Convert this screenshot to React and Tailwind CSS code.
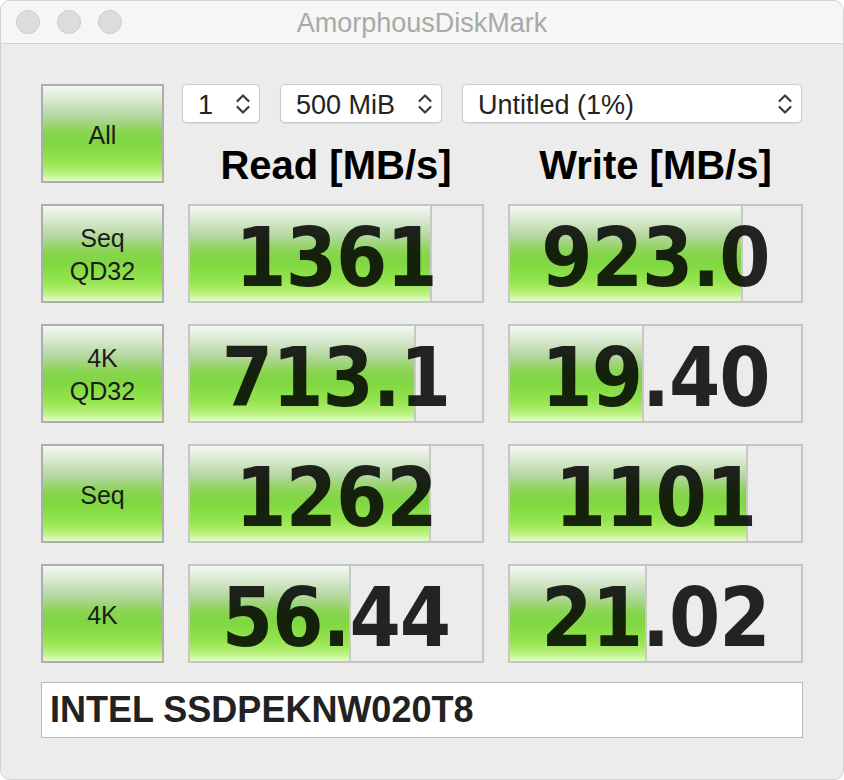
import React from "react";

// shared green "glossy" fill used by buttons and bars
const GREEN =
  "bg-[linear-gradient(to_bottom,#f4f7f2_0%,#d6e7cd_16%,#aed596_34%,#8cd556_47%,#7fd642_58%,#92e44b_78%,#b2ef72_90%,#e4fbc8_100%)]";

const results = [
  { label: ["Seq", "QD32"], read: "1361", readW: 242, write: "923.0", writeW: 233 },
  { label: ["4K", "QD32"], read: "713.1", readW: 226, write: "19.40", writeW: 134 },
  { label: ["Seq"], read: "1262", readW: 241, write: "1101", writeW: 238 },
  { label: ["4K"], read: "56.44", readW: 161, write: "21.02", writeW: 137 },
];

const Chevrons = () => (
  <svg width="16" height="26" viewBox="0 0 16 26" fill="none" stroke="#3a3a3a" strokeWidth="2.2" strokeLinecap="round" strokeLinejoin="round">
    <path d="M2.5 10 L8 4.5 L13.5 10" />
    <path d="M2.5 16 L8 21.5 L13.5 16" />
  </svg>
);

const Select = ({ value, width }) => (
  <div
    className="flex h-[39px] items-center justify-between rounded-[5px] border border-[#c9c9c9] bg-white pl-[15px] pr-[8px] text-[27px] text-[#232323] shadow-[0_1px_1px_rgba(0,0,0,0.08)]"
    style={{ width }}
  >
    <span className="pt-[3px] leading-none">{value}</span>
    <Chevrons />
  </div>
);

const TestButton = ({ lines }) => (
  <button
    className={`flex h-[99px] w-[123px] flex-col items-center justify-center border-2 border-[#adadad] pt-[3px] ${GREEN} text-[25px] leading-[33px] text-[#1c1c1c]`}
  >
    {lines.map((l) => (
      <span key={l}>{l}</span>
    ))}
  </button>
);

const ResultBar = ({ value, fill }) => (
  <div className="relative h-[99px] border-2 border-[#c5c5c5] bg-[#ececec]">
    <div className={`h-full border-r-2 border-[#c8c8c8] ${GREEN}`} style={{ width: fill }} />
    <div className="absolute inset-0 flex items-center justify-center pt-[8px]">
      <span className="font-['DejaVu_Sans',sans-serif] text-[82px] font-bold leading-[95px] font-stretch-condensed tracking-[-1px] text-black/85">
        {value}
      </span>
    </div>
  </div>
);

export default function App() {
  return (
    <div className="h-[780px] w-[844px] bg-white font-['Liberation_Sans',Arial,sans-serif]">
      <div className="flex h-full flex-col overflow-hidden rounded-[10px] border border-[#d2d2d2] bg-[#ececec]">
        {/* title bar */}
        <div className="relative flex h-[43px] shrink-0 items-center justify-center border-b border-[#d1d1d1] bg-[#f6f6f6]">
          <div className="absolute left-[15px] top-[9px] flex gap-[17px]">
            <span className="h-[24px] w-[24px] rounded-full border border-[#cbcbcb] bg-[#dcdcdc]" />
            <span className="h-[24px] w-[24px] rounded-full border border-[#cbcbcb] bg-[#dcdcdc]" />
            <span className="h-[24px] w-[24px] rounded-full border border-[#cbcbcb] bg-[#dcdcdc]" />
          </div>
          <span className="pt-[2px] text-[27px] text-[#a9a9a9]">AmorphousDiskMark</span>
        </div>

        <div className="px-[40px] pt-[40px]">
          <div className="grid grid-cols-[123px_296px_295px] gap-x-[24px] gap-y-[21px]">
            <TestButton lines={["All"]} />
            <div className="col-span-2 flex flex-col">
              <div className="-ml-[6px] flex gap-[20px]">
                <Select value="1" width={78} />
                <Select value="500 MiB" width={162} />
                <Select value="Untitled (1%)" width={340} />
              </div>
              <div className="mt-[24px] grid grid-cols-[296px_295px] gap-x-[24px] text-[40px] font-bold leading-[36px] text-black">
                <div className="text-center">Read [MB/s]</div>
                <div className="text-center">Write [MB/s]</div>
              </div>
            </div>

            {results.map((r) => (
              <React.Fragment key={r.label.join(" ")}>
                <TestButton lines={r.label} />
                <ResultBar value={r.read} fill={r.readW} />
                <ResultBar value={r.write} fill={r.writeW} />
              </React.Fragment>
            ))}
          </div>

          {/* drive name */}
          <div className="mt-[19px] flex h-[56px] w-[762px] items-center border border-[#b9b9b9] bg-white pl-[8px] text-[36px] font-bold text-[#222]">
            INTEL SSDPEKNW020T8
          </div>
        </div>
      </div>
    </div>
  );
}
